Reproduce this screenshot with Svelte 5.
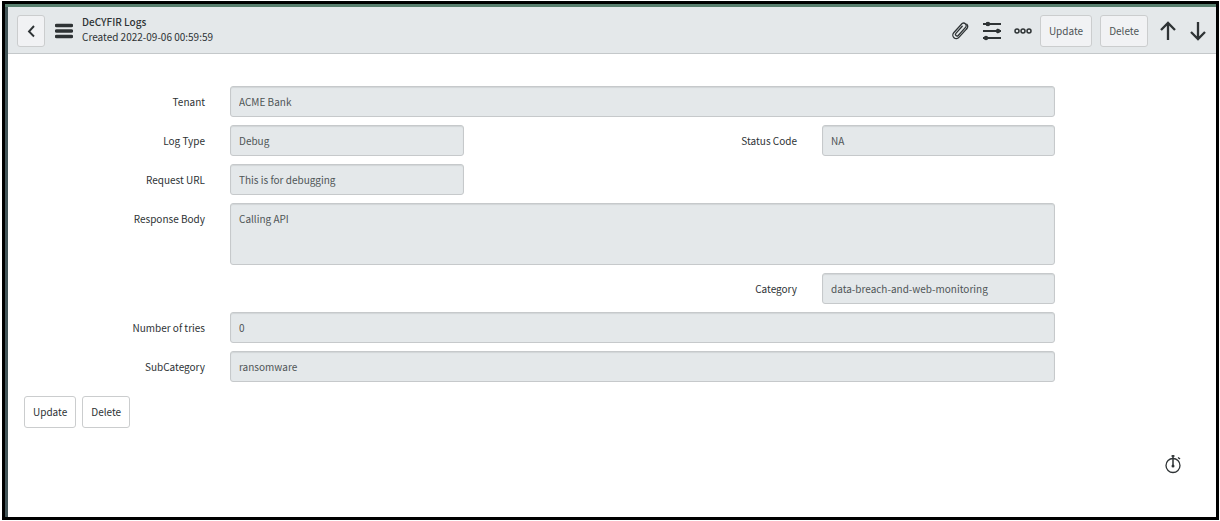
<script>
    let record = {
        tenant: "ACME Bank",
        logType: "Debug",
        statusCode: "NA",
        requestUrl: "This is for debugging",
        responseBody: "Calling API",
        category: "data-breach-and-web-monitoring",
        tries: "0",
        subCategory: "ransomware",
    };

    // side: full = whole row, left / right = one half of the row
    const fields = [
        { name: "tenant", label: "Tenant", side: "full" },
        { name: "logType", label: "Log Type", side: "left" },
        { name: "statusCode", label: "Status Code", side: "right" },
        { name: "requestUrl", label: "Request URL", side: "left" },
        { name: "responseBody", label: "Response Body", side: "full", multiline: true },
        { name: "category", label: "Category", side: "right" },
        { name: "tries", label: "Number of tries", side: "full" },
        { name: "subCategory", label: "SubCategory", side: "full" },
    ];
</script>

<div class="page">
    <div class="frame">
        <header>
            <button class="btn back" aria-label="Back">
                <svg width="10" height="14" viewBox="0 0 10 14">
                    <path d="M8 2 3 7.500l5 5" fill="none" stroke="currentColor" stroke-width="1.9" />
                </svg>
            </button>
            <button class="icon menu" aria-label="Additional actions">
                <svg width="18" height="16" viewBox="0 0 18 16">
                    <path d="M1.5 2.5h15M1.5 8h15M1.5 13.5h15" stroke="currentColor" stroke-width="3.4" stroke-linecap="round" />
                </svg>
            </button>
            <div class="title">
                <h1>DeCYFIR Logs</h1>
                <p>Created 2022-09-06 00:59:59</p>
            </div>
            <div class="tools">
                <button class="icon" aria-label="Manage attachments">
                    <svg width="20" height="20" viewBox="0 0 20 20">
                        <g transform="rotate(42 10 10)" fill="none" stroke="currentColor" stroke-width="1.3" stroke-linecap="round">
                            <path d="M13.5 4v11.5a3.5 3.5 0 0 1-7 0V3a2.7 2.7 0 0 1 5.2 0v11.5a1.6 1.6 0 0 1-3.2 0V5" />
                            <path d="M13.5 4a3 3 0 0 0-3-3.5" />
                        </g>
                    </svg>
                </button>
                <button class="icon sliders" aria-label="Personalize form">
                    <svg width="18" height="20" viewBox="0 0 18 20">
                        <path d="M0 3h18M0 10h18M0 17h18" stroke="currentColor" stroke-width="1.8" />
                        <path d="M3 1l3 2-3 2zM14 7.500l3.500 2.500-3.500 2.500z" fill="currentColor" />
                        <circle cx="5" cy="3" r="2.200" fill="currentColor" />
                        <circle cx="15" cy="10" r="2.200" fill="currentColor" />
                        <circle cx="3" cy="17" r="2.200" fill="currentColor" />
                    </svg>
                </button>
                <button class="icon" aria-label="More options">
                    <svg width="18" height="8" viewBox="0 0 18 8">
                        <g fill="none" stroke="currentColor" stroke-width="1.5">
                            <circle cx="3" cy="4" r="2" />
                            <circle cx="9" cy="4" r="2" />
                            <circle cx="15" cy="4" r="2" />
                        </g>
                    </svg>
                </button>
                <button class="btn">Update</button>
                <button class="btn">Delete</button>
                <button class="icon up" aria-label="Previous record">
                    <svg width="16" height="20" viewBox="0 0 16 20">
                        <path d="M8 19V2M1 9l7-7 7 7" fill="none" stroke="currentColor" stroke-width="2.3" />
                    </svg>
                </button>
                <button class="icon" aria-label="Next record">
                    <svg width="16" height="20" viewBox="0 0 16 20">
                        <path d="M8 1v17M1 11l7 7 7-7" fill="none" stroke="currentColor" stroke-width="2.3" />
                    </svg>
                </button>
            </div>
        </header>

        <form on:submit|preventDefault>
            {#each fields as field}
                <label class={field.side} for={field.name}>{field.label}</label>
                {#if field.multiline}
                    <textarea class={field.side} id={field.name} readonly value={record[field.name]}></textarea>
                {:else}
                    <input class={field.side} id={field.name} type="text" readonly value={record[field.name]} />
                {/if}
            {/each}
        </form>

        <div class="actions">
            <button class="btn">Update</button>
            <button class="btn">Delete</button>
        </div>

        <footer>
            <button class="icon" aria-label="Response time">
                <svg width="16" height="20" viewBox="0 0 16 20">
                    <circle cx="8" cy="11.5" r="7" fill="none" stroke="currentColor" stroke-width="1.3" />
                    <path d="M8 1v11M6.5 2h3M13 3.5l2 1.5" fill="none" stroke="currentColor" stroke-width="1.5" />
                    <circle cx="8" cy="12" r="1.5" fill="currentColor" />
                </svg>
            </button>
        </footer>
    </div>
</div>

<style>
    :global(body) {
        margin: 0;
        background: #fff;
    }

    .page {
        box-sizing: border-box;
        display: flex;
        min-height: 100vh;
        padding: 1px 1px 1px 2px;
        font-family: "Noto Sans CJK SC", "Open Sans", sans-serif;
        font-size: 10px;
        line-height: 15px;
        color: #2e3335;
    }

    .frame {
        flex: 1;
        border: 3px solid #000;
        box-shadow: inset 0 3px #587f6e, inset 3px 0 #435558;
        padding: 3px 0 0 3px;
    }

    header {
        display: flex;
        align-items: center;
        height: 44px;
        padding: 2px 10px 0 9px;
        background: #e4e8ea;
        border-bottom: 1px solid #c4c8ca;
    }

    button,
    input,
    textarea {
        box-sizing: border-box;
        margin: 0;
        font: inherit;
    }

    .btn {
        height: 32px;
        padding: 0 8px 2px;
        border: 1px solid #cbcdce;
        border-radius: 3px;
        background: #fff;
        color: #2e3335;
        cursor: pointer;
    }

    header .btn {
        background: #f1f2f4;
        color: #4f5557;
    }

    header .back {
        width: 28px;
        padding: 0;
        color: #2e3335;
    }

    .icon {
        padding: 0;
        border: 0;
        background: none;
        color: #2e3335;
        cursor: pointer;
    }

    svg {
        display: block;
        margin: 0 auto;
    }

    .menu {
        margin: 0 9px 0 10px;
    }

    .title {
        padding-bottom: 4px;
    }

    h1,
    p {
        margin: 0;
        font-size: 10px;
        line-height: 15px;
    }

    h1 {
        font-weight: 500;
    }

    .tools {
        display: flex;
        align-items: center;
        gap: 8px;
        margin-left: auto;
    }

    .sliders {
        margin: 0 5px;
    }

    .up {
        margin: 0 6px 0 4px;
    }

    form {
        display: grid;
        grid-template-columns: 197fr 234fr 308fr 233fr 136fr;
        gap: 8px 25px;
        padding-top: 32px;
    }

    label {
        padding-top: 8px;
        text-align: right;
    }

    label.full,
    label.left {
        grid-column: 1;
    }

    label.right {
        grid-column: 3;
    }

    input,
    textarea {
        width: 100%;
        height: 31px;
        padding: 0 8px;
        border: 1px solid #c6c9cb;
        border-radius: 3px;
        background: #e4e8ea;
        box-shadow: inset 0 1px 1px rgba(0, 0, 0, 0.08);
        color: #4f5557;
        outline: none;
    }

    textarea {
        display: block;
        height: 62px;
        padding-top: 7px;
        resize: none;
    }

    input.left {
        grid-column: 2;
    }

    input.right {
        grid-column: 4;
    }

    input.full,
    textarea.full {
        grid-column: 2 / 5;
    }

    .actions {
        display: flex;
        gap: 6px;
        padding: 14px 16px;
    }

    footer {
        display: flex;
        justify-content: flex-end;
        padding: 12px 35px;
    }
</style>
